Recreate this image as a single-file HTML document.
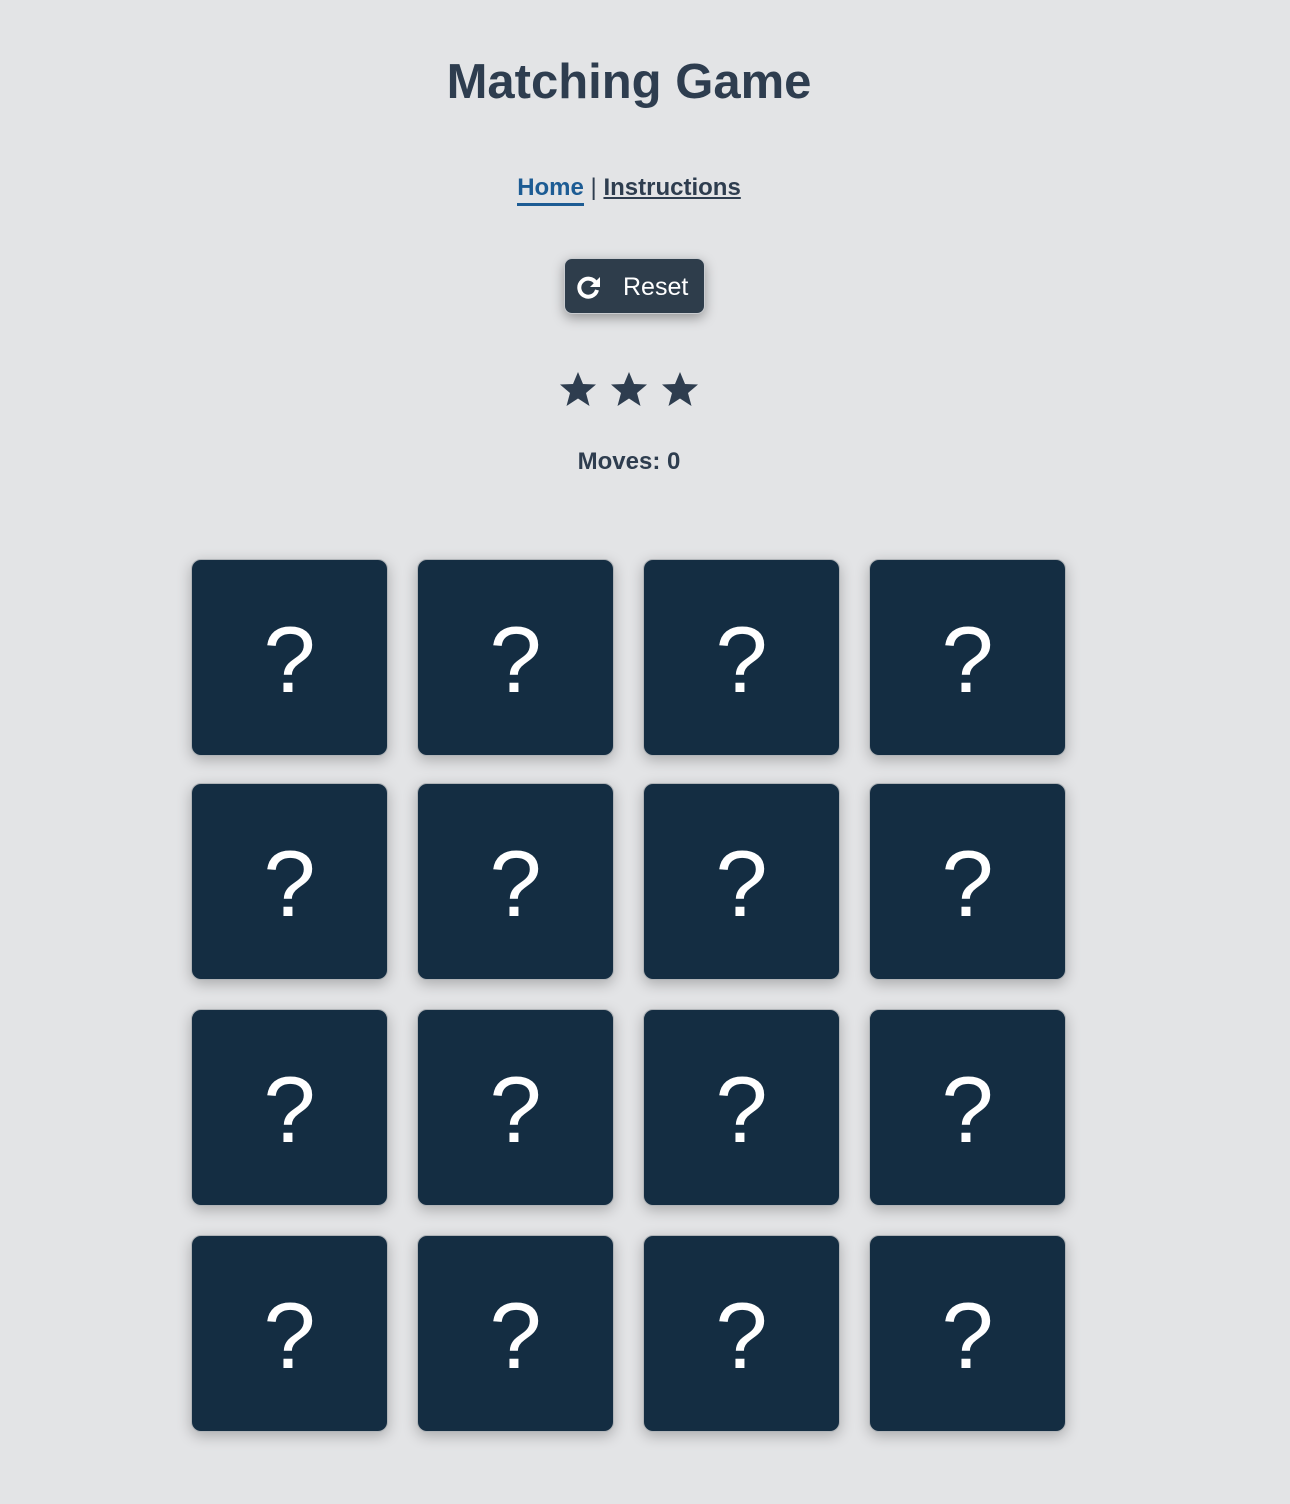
<!DOCTYPE html>
<html><head><meta charset="utf-8"><style>
body{margin:0;width:1290px;height:1504px;background:#e3e4e6;font-family:"Liberation Sans",sans-serif;color:#2e3d4f;position:relative;overflow:hidden}
.c{position:absolute;left:0;width:1258px;text-align:center}
h1{position:absolute;left:0;width:1258px;text-align:center;top:54px;margin:0;font-size:49px;font-weight:bold;color:#2e3d4f}
.nav{top:174px;font-size:24px;font-weight:bold}
.nav a{color:#2e3d4f;text-decoration:underline}
.nav a.h{color:#1d5c94;text-decoration:none;border-bottom:3px solid #1d5c94;padding-bottom:2px}
.nav i{font-style:normal;font-weight:normal}
.btn{position:absolute;left:564px;top:258px;width:141px;height:56px;background:#2e3d4b;border:1px solid #c9ccd0;border-radius:8px;box-shadow:0 4px 12px rgba(0,0,0,.35);color:#fff;font-size:25px;box-sizing:border-box}
.btn span{position:absolute;left:58px;top:14px}
.btn svg{position:absolute;left:12px;top:16px}
.stars{position:absolute;left:558px;top:370px}
.moves{top:448px;font-size:24px;font-weight:bold}
.card{position:absolute;width:197px;height:197px;background:#142d42;border:1px solid #b0b4b8;box-sizing:border-box;border-radius:10px;box-shadow:0 4px 14px rgba(0,0,0,.25);color:#fff;font-size:94px;text-align:center;line-height:200px}
</style></head><body>
<h1>Matching Game</h1>
<div class="c nav"><a class="h">Home</a> <i>|</i> <a>Instructions</a></div>
<div class="btn"><svg width="24" height="24" viewBox="0 0 24 24"><path d="M19 8A9 9 0 1 0 20 15" fill="none" stroke="#fff" stroke-width="4"/><path d="M23 2V12H13Z" fill="#fff"/></svg><span>Reset</span></div>
<svg class="stars" width="142" height="40" viewBox="0 0 142 40"><g fill="#2e3d4f"><path id="s" d="M20 2L25 14L38 14.5L28 23L31.5 36L20 28.5L8.5 36L12 23L2 14.5L15 14Z"/><use href="#s" x="51"/><use href="#s" x="102"/></g></svg>
<div class="c moves">Moves: 0</div>
<div class="card" style="left:191px;top:559px">?</div><div class="card" style="left:417px;top:559px">?</div><div class="card" style="left:643px;top:559px">?</div><div class="card" style="left:869px;top:559px">?</div>
<div class="card" style="left:191px;top:783px">?</div><div class="card" style="left:417px;top:783px">?</div><div class="card" style="left:643px;top:783px">?</div><div class="card" style="left:869px;top:783px">?</div>
<div class="card" style="left:191px;top:1009px">?</div><div class="card" style="left:417px;top:1009px">?</div><div class="card" style="left:643px;top:1009px">?</div><div class="card" style="left:869px;top:1009px">?</div>
<div class="card" style="left:191px;top:1235px">?</div><div class="card" style="left:417px;top:1235px">?</div><div class="card" style="left:643px;top:1235px">?</div><div class="card" style="left:869px;top:1235px">?</div>
</body></html>
